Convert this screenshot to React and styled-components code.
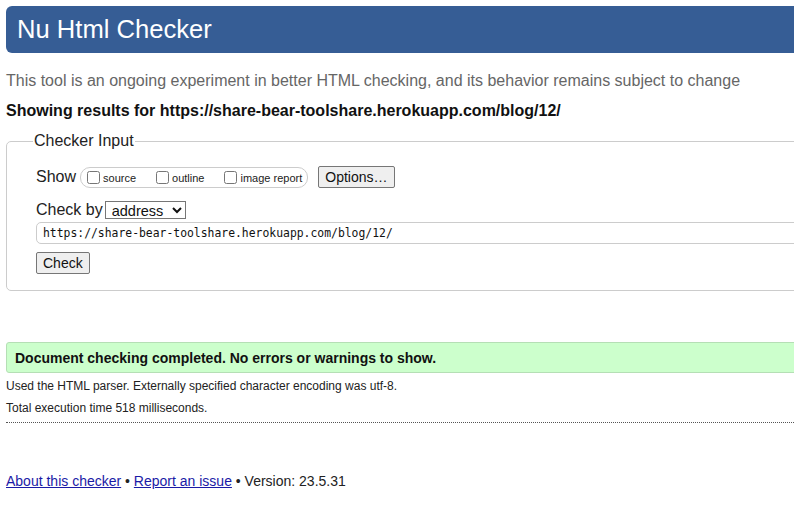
import React from "react";
import styled, { createGlobalStyle } from "styled-components";

const GlobalStyle = createGlobalStyle`
  html, body {
    margin: 0;
    padding: 0;
    overflow: hidden;
    background: #fff;
  }
  body {
    font-family: "Liberation Sans", Arial, sans-serif;
    color: #222;
  }
`;

const Page = styled.div`
  width: 860px;
  padding: 6px 0 0 6px;
`;

const Header = styled.header`
  background-color: #365d95;
  border-radius: 6px;
  height: 47px;
  display: flex;
  align-items: center;
  padding-left: 11px;
`;

const Title = styled.h1`
  margin: 0;
  font-size: 25.6px;
  font-weight: normal;
  color: #fff;
  line-height: 1;
  padding-top: 1px;
`;

const Intro = styled.p`
  margin: 19px 0 0;
  font-size: 16px;
  line-height: 18px;
  color: #666;
`;

const Results = styled.p`
  margin: 12px 0 0;
  font-size: 16px;
  line-height: 18px;
  font-weight: bold;
  color: #111;
`;

const Fieldset = styled.fieldset`
  margin: 12px 0 0;
  border: 1px solid #ccc;
  border-radius: 5px;
  padding: 16px 0 16px 29px;
  min-width: 0;
`;

const Legend = styled.legend`
  font-size: 16px;
  padding: 0 1px;
  margin-left: -3px;
  color: #222;
`;

const Row = styled.div`
  display: flex;
  align-items: center;
  margin-top: ${(p) => p.$top || 0}px;
`;

const Label = styled.span`
  font-size: 16px;
  margin-right: ${(p) => p.$gap || 4}px;
`;

const Group = styled.span`
  display: inline-flex;
  align-items: center;
  border: 1px solid #ccc;
  border-radius: 10px;
  height: 19px;
  padding: 0 5px 0 3px;
  gap: 17px;
`;

const Option = styled.label`
  display: inline-flex;
  align-items: center;
  font-size: 11px;
  color: #222;
  padding-top: 2px;

  input {
    margin: -2px 3px 0 3px;
    width: 13px;
    height: 13px;
  }
`;

const Button = styled.button`
  font-family: "Liberation Sans", Arial, sans-serif;
  font-size: 14px;
  color: #111;
  background: #efefef;
  border: 1px solid #767676;
  border-radius: 2px;
  height: 22px;
  padding: 0 6px;
  margin-left: ${(p) => p.$left || 0}px;
`;

const Select = styled.select`
  font-family: "Liberation Sans", Arial, sans-serif;
  font-size: 14.5px;
  width: 81px;
  height: 18px;
  padding: 0 0 0 2px;
  border: 1px solid #767676;
  border-radius: 0;
  background: #fff;
  color: #111;
`;

const UrlInput = styled.input`
  display: block;
  box-sizing: border-box;
  width: 100%;
  height: 22px;
  margin-top: 3px;
  padding: 0 6px;
  border: 1px solid #ccc;
  border-radius: 5px;
  font-family: "DejaVu Sans Mono", "Liberation Mono", monospace;
  font-size: 11.4px;
  color: #111;
`;

const Notice = styled.div`
  margin-top: 51px;
  background: #ccffcc;
  border: 1px solid #b5dfb5;
  border-radius: 3px;
  height: 29px;
  display: flex;
  align-items: center;
  padding-left: 8px;
  font-size: 14px;
  font-weight: bold;
  color: #111;
`;

const Detail = styled.p`
  margin: ${(p) => p.$top || 0}px 0 0;
  font-size: 12px;
  line-height: 14px;
  color: #222;
`;

const Divider = styled.hr`
  margin: 7px 0 0;
  border: 0;
  border-top: 1px dotted #555;
  height: 0;
`;

const Footer = styled.p`
  margin: 50px 0 0;
  font-size: 14px;
  line-height: 16px;
  color: #222;

  a {
    color: #1a1aa6;
  }
`;

const App = () => (
  <>
    <GlobalStyle />
    <Page>
      <Header>
        <Title>Nu Html Checker</Title>
      </Header>
      <Intro>
        This tool is an ongoing experiment in better HTML checking, and its behavior remains subject to change
      </Intro>
      <Results>Showing results for https://share-bear-toolshare.herokuapp.com/blog/12/</Results>
      <Fieldset>
        <Legend>Checker Input</Legend>
        <Row>
          <Label>Show</Label>
          <Group>
            <Option>
              <input type="checkbox" />
              source
            </Option>
            <Option>
              <input type="checkbox" />
              outline
            </Option>
            <Option>
              <input type="checkbox" />
              image report
            </Option>
          </Group>
          <Button $left={10}>Options…</Button>
        </Row>
        <Row $top={13}>
          <Label $gap={2}>Check by</Label>
          <Select defaultValue="address">
            <option value="address">address</option>
          </Select>
        </Row>
        <UrlInput defaultValue="https://share-bear-toolshare.herokuapp.com/blog/12/" />
        <Row $top={8}>
          <Button>Check</Button>
        </Row>
      </Fieldset>
      <Notice>Document checking completed. No errors or warnings to show.</Notice>
      <Detail $top={6}>Used the HTML parser. Externally specified character encoding was utf-8.</Detail>
      <Detail $top={8}>Total execution time 518 milliseconds.</Detail>
      <Divider />
      <Footer>
        <a href="#about">About this checker</a> • <a href="#report">Report an issue</a> • Version: 23.5.31
      </Footer>
    </Page>
  </>
);

export default App;
